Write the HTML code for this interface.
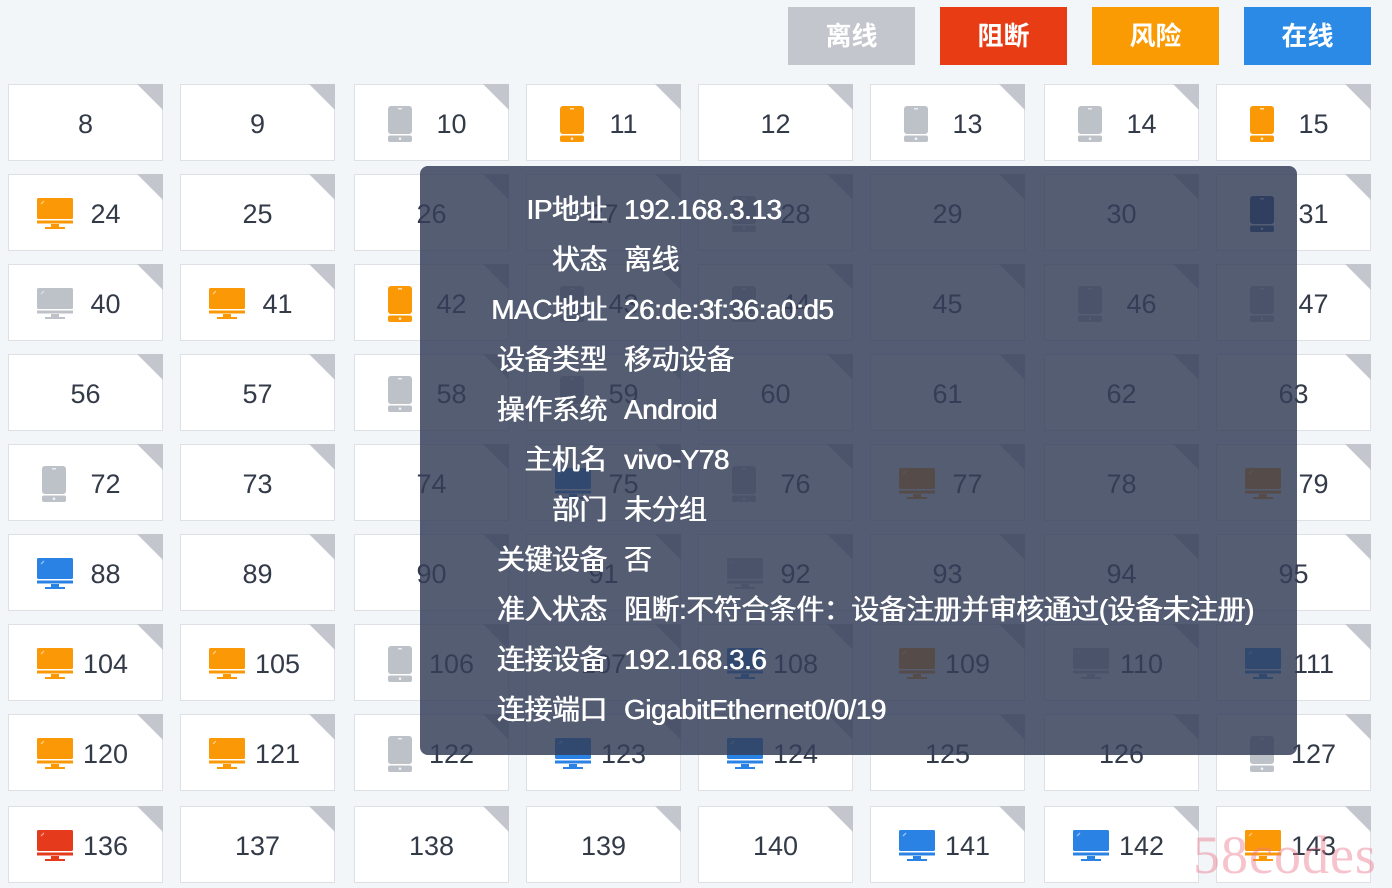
<!DOCTYPE html>
<html><head><meta charset="utf-8"><style>
body{margin:0;width:1392px;height:888px;background:#f3f6f9;position:relative;overflow:hidden;font-family:"Liberation Sans","Noto Sans CJK SC",sans-serif}
.b{position:absolute;top:7px;width:127px;height:58px;color:#fff;font-size:26px;line-height:58px;text-align:center;font-weight:bold}
.c{position:absolute;width:153px;height:75px;background:#fff;border:1px solid #dde0e5;font-size:27px;color:#333a48;line-height:79px;text-align:center;box-sizing:content-box}
.c::after{content:"";position:absolute;right:-1px;top:-1px;border-style:solid;border-width:0 26px 26px 0;border-color:transparent #c3c6cc transparent transparent}
.c.i{padding-left:40px;width:113px}
.c svg{position:absolute;top:21px}
.c svg.m{left:28px;top:23px;width:36px;height:32px}
.c svg.p{left:33px;width:24px;height:36px;top:21px}
.o{color:#fa9805}.g{color:#bdc1c8}.bl{color:#2a82e4}.r{color:#e63a1c}.db{color:#1b3f8c}.br{color:#7b4a22}
.c1{left:8px}.c2{left:180px}.c3{left:354px}.c4{left:526px}.c5{left:698px}.c6{left:870px}.c7{left:1044px}.c8{left:1216px}
.r1{top:84px}.r2{top:174px}.r3{top:264px}.r4{top:354px}.r5{top:444px}.r6{top:534px}.r7{top:624px}.r8{top:714px}.r9{top:806px}
.tip{position:absolute;left:420px;top:166px;width:877px;height:589px;background:rgba(52,62,88,0.84);border-radius:8px;color:#fff;font-size:28px;text-shadow:0.4px 0 0 #fff,-0.3px 0 0 #fff;letter-spacing:-0.5px}
.tip div{position:absolute;left:0;height:50px;line-height:50px;white-space:nowrap}
.tip .l{width:187px;text-align:right}
.tip .v{left:204px}
.wm{position:absolute;left:1193px;top:824px;font-family:"Liberation Serif",serif;font-size:54px;color:rgba(235,120,140,0.45);letter-spacing:1px}
</style></head><body>
<svg width="0" height="0" style="position:absolute"><defs>
<symbol id="mon" viewBox="0 0 36 32"><rect x="0" y="0" width="36" height="21" rx="1.5" fill="currentColor"/><rect x="0" y="22.5" width="36" height="3" fill="currentColor"/><rect x="14" y="26" width="8" height="3" fill="currentColor"/><rect x="8" y="29" width="20" height="2" fill="currentColor"/><path d="M4 6 L7 3" stroke="#fff" stroke-opacity=".6" stroke-width="1.2"/></symbol>
<symbol id="ph" viewBox="0 0 24 36"><rect x="0" y="0" width="24" height="28" rx="3" fill="currentColor"/><rect x="0" y="29.5" width="24" height="6.5" rx="2" fill="currentColor"/><rect x="10" y="2" width="4" height="1.5" fill="#fff" opacity=".7"/><circle cx="12" cy="32.7" r="1.3" fill="#fff" opacity=".8"/></symbol>
</defs></svg>
<div class="b" style="left:788px;background:#c3c6cc">离线</div>
<div class="b" style="left:940px;background:#e83c14">阻断</div>
<div class="b" style="left:1092px;background:#fb9b04">风险</div>
<div class="b" style="left:1244px;background:#2a8ae6">在线</div>

<div class="c c1 r1">8</div><div class="c c2 r1">9</div>
<div class="c c3 r1 i"><svg class="p g"><use href="#ph"/></svg>10</div>
<div class="c c4 r1 i"><svg class="p o"><use href="#ph"/></svg>11</div>
<div class="c c5 r1">12</div>
<div class="c c6 r1 i"><svg class="p g"><use href="#ph"/></svg>13</div>
<div class="c c7 r1 i"><svg class="p g"><use href="#ph"/></svg>14</div>
<div class="c c8 r1 i"><svg class="p o"><use href="#ph"/></svg>15</div>

<div class="c c1 r2 i"><svg class="m o"><use href="#mon"/></svg>24</div><div class="c c2 r2">25</div>
<div class="c c3 r2">26</div><div class="c c4 r2">27</div>
<div class="c c5 r2 i"><svg class="p g"><use href="#ph"/></svg>28</div>
<div class="c c6 r2">29</div><div class="c c7 r2">30</div>
<div class="c c8 r2 i"><svg class="p db"><use href="#ph"/></svg>31</div>

<div class="c c1 r3 i"><svg class="m g"><use href="#mon"/></svg>40</div>
<div class="c c2 r3 i"><svg class="m o"><use href="#mon"/></svg>41</div>
<div class="c c3 r3 i"><svg class="p o"><use href="#ph"/></svg>42</div>
<div class="c c4 r3 i"><svg class="p g"><use href="#ph"/></svg>43</div>
<div class="c c5 r3 i"><svg class="p g"><use href="#ph"/></svg>44</div>
<div class="c c6 r3">45</div>
<div class="c c7 r3 i"><svg class="p g"><use href="#ph"/></svg>46</div>
<div class="c c8 r3 i"><svg class="p g"><use href="#ph"/></svg>47</div>

<div class="c c1 r4">56</div><div class="c c2 r4">57</div>
<div class="c c3 r4 i"><svg class="p g"><use href="#ph"/></svg>58</div>
<div class="c c4 r4 i"><svg class="p g"><use href="#ph"/></svg>59</div>
<div class="c c5 r4">60</div><div class="c c6 r4">61</div><div class="c c7 r4">62</div><div class="c c8 r4">63</div>

<div class="c c1 r5 i"><svg class="p g"><use href="#ph"/></svg>72</div><div class="c c2 r5">73</div>
<div class="c c3 r5">74</div>
<div class="c c4 r5 i"><svg class="m bl"><use href="#mon"/></svg>75</div>
<div class="c c5 r5 i"><svg class="p g"><use href="#ph"/></svg>76</div>
<div class="c c6 r5 i"><svg class="m o"><use href="#mon"/></svg>77</div>
<div class="c c7 r5">78</div>
<div class="c c8 r5 i"><svg class="m o"><use href="#mon"/></svg>79</div>

<div class="c c1 r6 i"><svg class="m bl"><use href="#mon"/></svg>88</div><div class="c c2 r6">89</div>
<div class="c c3 r6">90</div><div class="c c4 r6">91</div>
<div class="c c5 r6 i"><svg class="m g"><use href="#mon"/></svg>92</div>
<div class="c c6 r6">93</div><div class="c c7 r6">94</div><div class="c c8 r6">95</div>

<div class="c c1 r7 i"><svg class="m o"><use href="#mon"/></svg>104</div>
<div class="c c2 r7 i"><svg class="m o"><use href="#mon"/></svg>105</div>
<div class="c c3 r7 i"><svg class="p g"><use href="#ph"/></svg>106</div>
<div class="c c4 r7">107</div>
<div class="c c5 r7 i"><svg class="m bl"><use href="#mon"/></svg>108</div>
<div class="c c6 r7 i"><svg class="m o"><use href="#mon"/></svg>109</div>
<div class="c c7 r7 i"><svg class="m g"><use href="#mon"/></svg>110</div>
<div class="c c8 r7 i"><svg class="m bl"><use href="#mon"/></svg>111</div>

<div class="c c1 r8 i"><svg class="m o"><use href="#mon"/></svg>120</div>
<div class="c c2 r8 i"><svg class="m o"><use href="#mon"/></svg>121</div>
<div class="c c3 r8 i"><svg class="p g"><use href="#ph"/></svg>122</div>
<div class="c c4 r8 i"><svg class="m bl"><use href="#mon"/></svg>123</div>
<div class="c c5 r8 i"><svg class="m bl"><use href="#mon"/></svg>124</div>
<div class="c c6 r8">125</div><div class="c c7 r8">126</div>
<div class="c c8 r8 i"><svg class="p g"><use href="#ph"/></svg>127</div>

<div class="c c1 r9 i"><svg class="m r"><use href="#mon"/></svg>136</div>
<div class="c c2 r9">137</div><div class="c c3 r9">138</div><div class="c c4 r9">139</div><div class="c c5 r9">140</div>
<div class="c c6 r9 i"><svg class="m bl"><use href="#mon"/></svg>141</div>
<div class="c c7 r9 i"><svg class="m bl"><use href="#mon"/></svg>142</div>
<div class="c c8 r9 i"><svg class="m o"><use href="#mon"/></svg>143</div>

<div class="tip">
<div class="l" style="top:19px">IP地址</div><div class="v" style="top:19px">192.168.3.13</div>
<div class="l" style="top:69px">状态</div><div class="v" style="top:69px">离线</div>
<div class="l" style="top:119px">MAC地址</div><div class="v" style="top:119px">26:de:3f:36:a0:d5</div>
<div class="l" style="top:169px">设备类型</div><div class="v" style="top:169px">移动设备</div>
<div class="l" style="top:219px">操作系统</div><div class="v" style="top:219px">Android</div>
<div class="l" style="top:269px">主机名</div><div class="v" style="top:269px">vivo-Y78</div>
<div class="l" style="top:319px">部门</div><div class="v" style="top:319px">未分组</div>
<div class="l" style="top:369px">关键设备</div><div class="v" style="top:369px">否</div>
<div class="l" style="top:419px">准入状态</div><div class="v" style="top:419px">阻断:不符合条件：设备注册并审核通过(设备未注册)</div>
<div class="l" style="top:469px">连接设备</div><div class="v" style="top:469px">192.168.3.6</div>
<div class="l" style="top:519px">连接端口</div><div class="v" style="top:519px">GigabitEthernet0/0/19</div>
</div>
<div class="wm">58codes</div>
</body></html>
